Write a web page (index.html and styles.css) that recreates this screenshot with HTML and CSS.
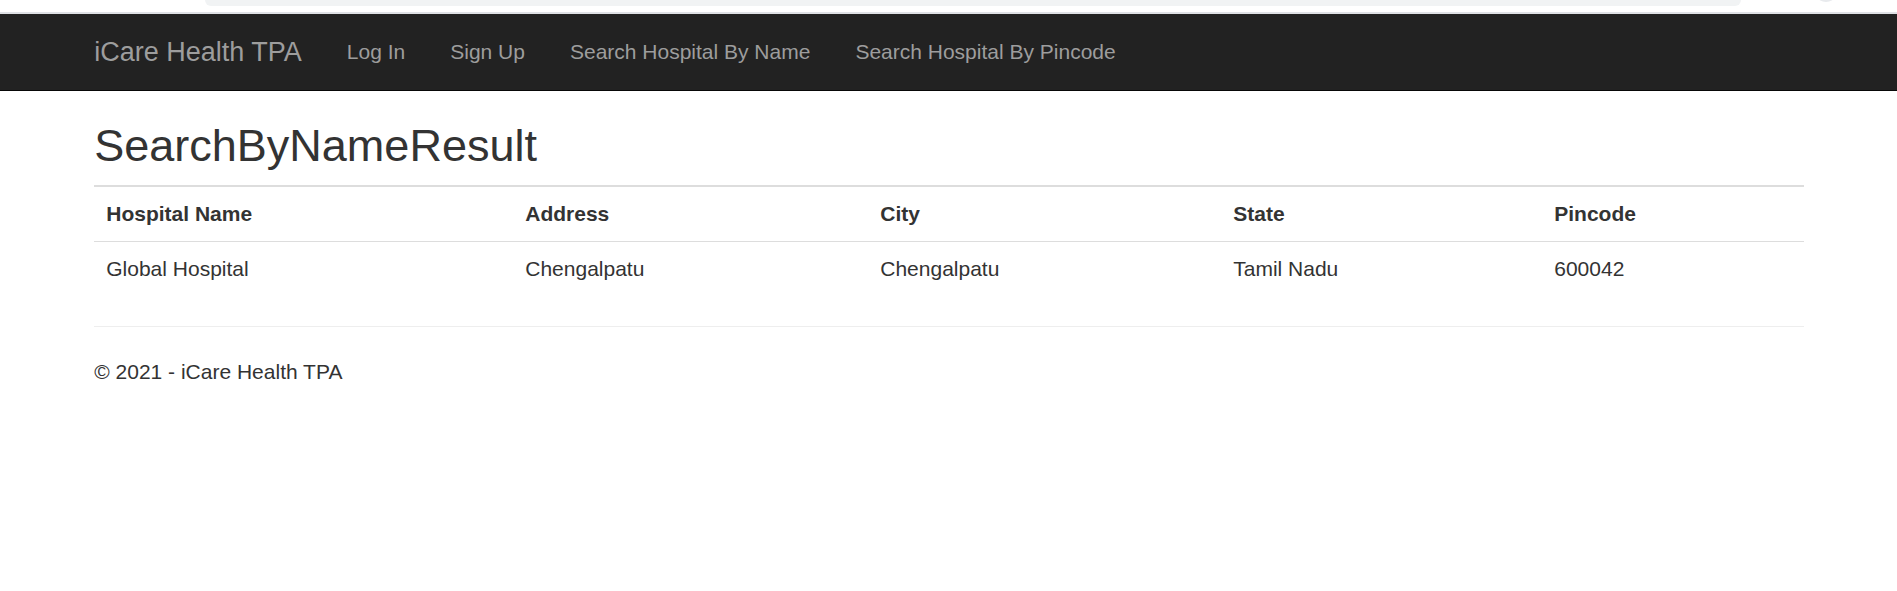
FILE: index.html
```html
<!DOCTYPE html>
<html lang="en">
<head>
<meta charset="utf-8">
<title>SearchByNameResult - iCare Health TPA</title>
<link rel="stylesheet" href="styles.css">
</head>
<body>
<div class="chrome">
  <div class="chrome-bar"></div>
  <div class="chrome-dot"></div>
</div>
<nav class="navbar">
  <div class="container nav-inner">
    <a class="brand" href="#">iCare Health TPA</a>
    <ul class="nav-links">
      <li><a href="#">Log In</a></li>
      <li><a href="#">Sign Up</a></li>
      <li><a href="#">Search Hospital By Name</a></li>
      <li><a href="#">Search Hospital By Pincode</a></li>
    </ul>
  </div>
</nav>
<main class="container body-content">
  <h2 class="title">SearchByNameResult</h2>
  <table class="table">
    <colgroup>
      <col class="c1"><col class="c2"><col class="c3"><col class="c4"><col class="c5">
    </colgroup>
    <tbody>
      <tr class="head-row">
        <th>Hospital Name</th>
        <th>Address</th>
        <th>City</th>
        <th>State</th>
        <th>Pincode</th>
      </tr>
      <tr>
        <td>Global Hospital</td>
        <td>Chengalpatu</td>
        <td>Chengalpatu</td>
        <td>Tamil Nadu</td>
        <td>600042</td>
      </tr>
    </tbody>
  </table>
  <hr class="rule">
  <footer class="footer">
    <p>&copy; 2021 - iCare Health TPA</p>
  </footer>
</main>
</body>
</html>
```
FILE: styles.css
```css
* { box-sizing: border-box; }
html, body { margin: 0; padding: 0; }
body {
  font-family: "Liberation Sans", Arial, Helvetica, sans-serif;
  font-size: 21px;
  line-height: 30px;
  color: #333;
  background: #fff;
}
.chrome {
  position: relative;
  height: 14px;
  background: #fff;
  border-bottom: 2px solid #dfe1e5;
}
.chrome-bar {
  position: absolute;
  left: 205px;
  width: 1536px;
  top: 0;
  height: 6px;
  background: #f1f3f4;
  border-radius: 0 0 14px 14px;
}
.chrome-dot {
  position: absolute;
  left: 1818px;
  top: -8px;
  width: 16px;
  height: 10px;
  border-radius: 50%;
  background: #e8eaed;
}
.container {
  width: 1755px;
  margin: 0 auto;
  padding: 0 22.5px 0 23.25px;
}
.navbar {
  background: #222;
  border-bottom: 1.5px solid #080808;
  height: 76.5px;
}
.nav-inner {
  display: flex;
  align-items: flex-start;
}
.brand {
  display: block;
  margin-left: -22.5px;
  padding: 22.5px;
  font-size: 27px;
  line-height: 30px;
  color: #9d9d9d;
  text-decoration: none;
}
.nav-links {
  display: flex;
  list-style: none;
  margin: 0;
  padding: 0;
}
.nav-links a {
  display: block;
  padding: 22.5px;
  line-height: 30px;
  color: #9d9d9d;
  text-decoration: none;
}
.title {
  margin: 30px 0 15px;
  font-size: 45px;
  font-weight: 500;
  line-height: 1.1;
}
.table {
  width: 100%;
  table-layout: fixed;
  border-collapse: collapse;
  border-spacing: 0;
  margin-bottom: 30px;
}
.c1 { width: 419px; }
.c2 { width: 355px; }
.c3 { width: 353px; }
.c4 { width: 321px; }
.c5 { width: auto; }
.table th, .table td {
  padding: 12px;
  line-height: 30px;
  text-align: left;
  vertical-align: top;
  border-top: 1.5px solid #ddd;
}
.table th { font-weight: bold; }
.head-row th { border-top: 2px solid #ddd; }
.rule {
  margin: 30px 0;
  border: 0;
  border-top: 1.5px solid #eee;
  height: 0;
}
.footer p { margin: 0 0 15px; }
```
